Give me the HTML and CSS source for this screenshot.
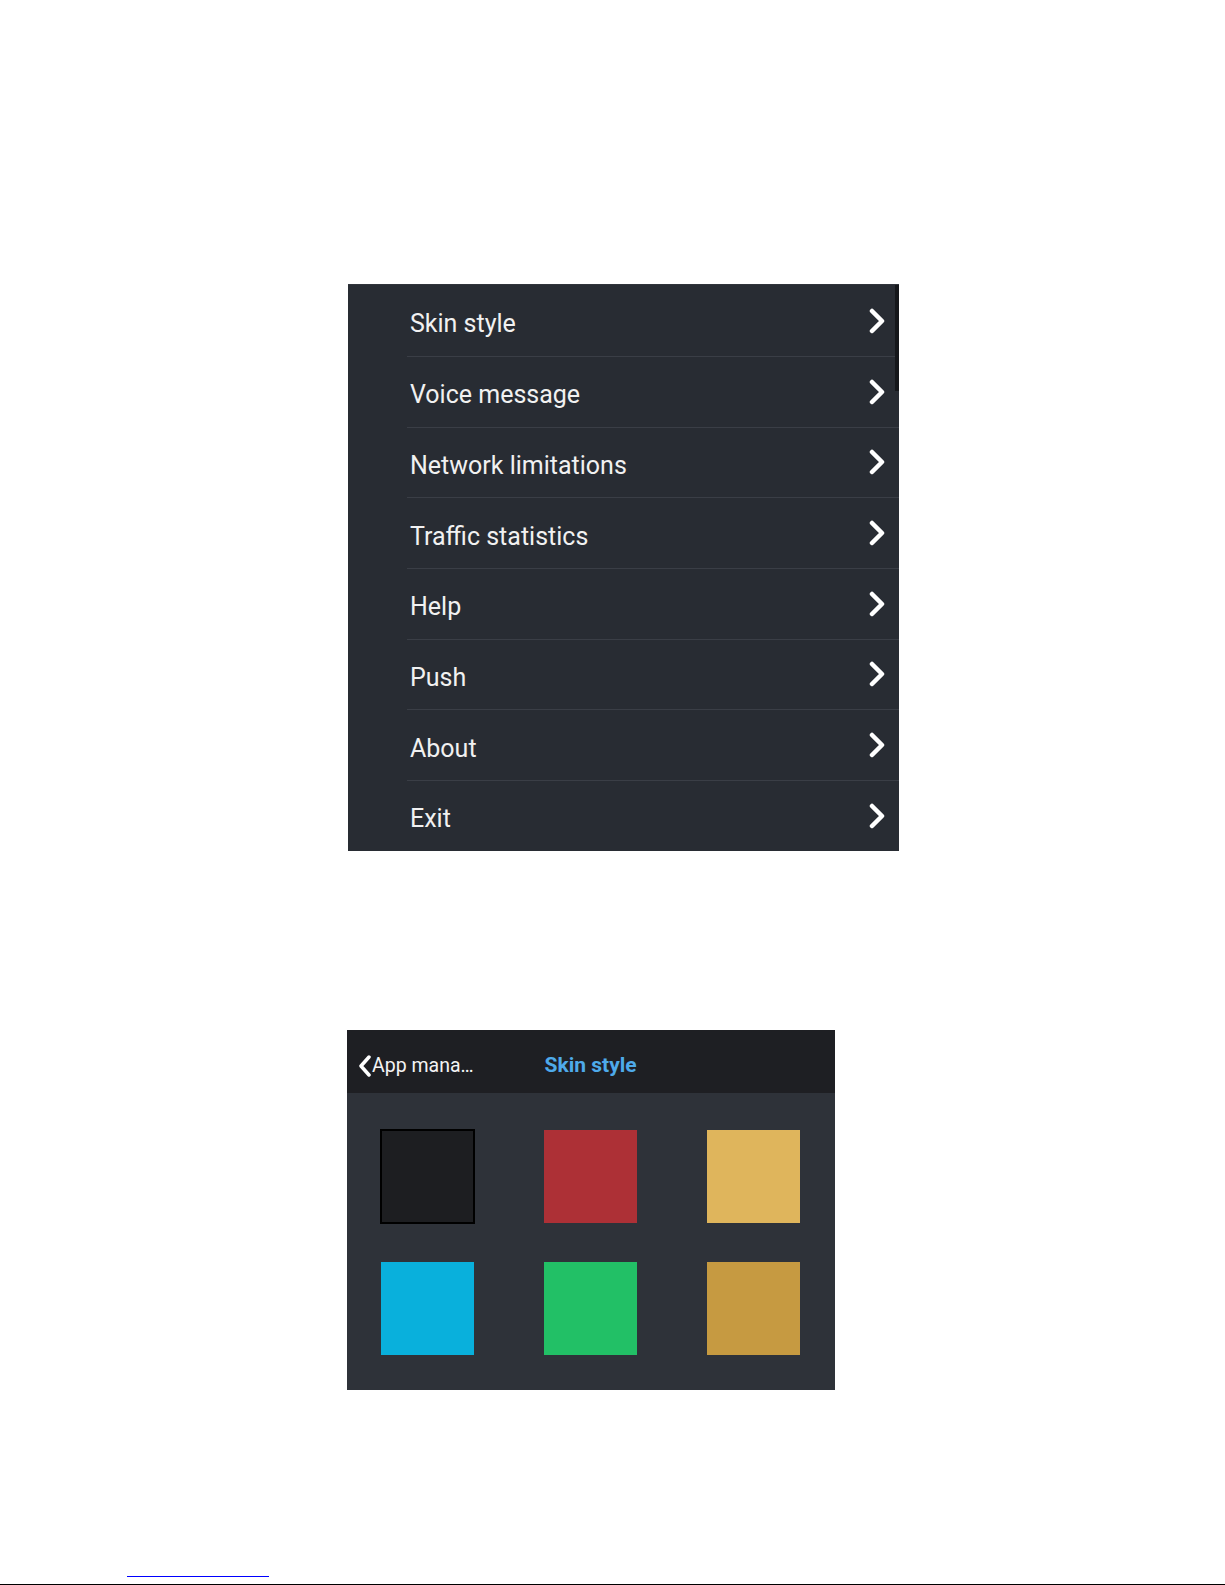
FILE: index.html
```html
<!DOCTYPE html>
<html lang="en">
<head>
    <meta charset="UTF-8">
    <meta name="viewport" content="width=device-width, initial-scale=1.0">
    <title>App settings</title>
    <link rel="stylesheet" href="styles.css">
</head>
<body>
    <div class="page">
        <div class="menu">
            <span class="scroll-thumb"></span>
            <div class="menu-item"><span>Skin style</span><svg class="arrow" viewBox="0 0 20 26"><path d="M5 3 L15 13 L5 23"/></svg></div>
            <div class="menu-item"><span>Voice message</span><svg class="arrow" viewBox="0 0 20 26"><path d="M5 3 L15 13 L5 23"/></svg></div>
            <div class="menu-item"><span>Network limitations</span><svg class="arrow" viewBox="0 0 20 26"><path d="M5 3 L15 13 L5 23"/></svg></div>
            <div class="menu-item"><span>Traffic statistics</span><svg class="arrow" viewBox="0 0 20 26"><path d="M5 3 L15 13 L5 23"/></svg></div>
            <div class="menu-item"><span>Help</span><svg class="arrow" viewBox="0 0 20 26"><path d="M5 3 L15 13 L5 23"/></svg></div>
            <div class="menu-item"><span>Push</span><svg class="arrow" viewBox="0 0 20 26"><path d="M5 3 L15 13 L5 23"/></svg></div>
            <div class="menu-item"><span>About</span><svg class="arrow" viewBox="0 0 20 26"><path d="M5 3 L15 13 L5 23"/></svg></div>
            <div class="menu-item"><span>Exit</span><svg class="arrow" viewBox="0 0 20 26"><path d="M5 3 L15 13 L5 23"/></svg></div>
        </div>

        <div class="skin-panel">
            <div class="skin-header">
                <div class="back">
                    <svg class="back-arrow" viewBox="0 0 14 22"><path d="M11 2 L3 11 L11 20"/></svg>
                    <span>App mana…</span>
                </div>
                <div class="skin-title">Skin style</div>
            </div>
            <div class="swatches">
                <div class="swatch black"></div>
                <div class="swatch red"></div>
                <div class="swatch yellow"></div>
                <div class="swatch blue"></div>
                <div class="swatch green"></div>
                <div class="swatch gold"></div>
            </div>
        </div>
    </div>

    <div class="footnote">
        <span class="note-link"></span>
    </div>
    <div class="page-rule"></div>
</body>
</html>
```

FILE: styles.css
```css
body {
    margin: 0;
    background: #fff;
    font-family: Roboto, "Noto Sans", sans-serif;
}

.page {
    padding: 284px 0 0 347px;
}

.menu {
    position: relative;
    width: 551px;
    margin-left: 1px;
    background: #282c33;
    border-top: 1px solid #31353c;
}

.scroll-thumb {
    position: absolute;
    top: 0;
    right: 0;
    width: 4px;
    height: 106px;
    background: #15171b;
}

.menu-item {
    display: flex;
    align-items: center;
    justify-content: space-between;
    height: 69.67px;
    margin-left: 59px;
    padding: 0 12px 0 3px;
    border-top: 1px solid #3a3e46;
    color: #f1f1f1;
    font-size: 25px;
}

.menu-item span {
    margin-top: 6px;
}

.menu-item:first-of-type {
    border-top: none;
    height: 71px;
}

.arrow {
    width: 20px;
    height: 26px;
}

.arrow path {
    fill: none;
    stroke: #fff;
    stroke-width: 4.5;
    stroke-linecap: round;
    stroke-linejoin: round;
}

.skin-panel {
    width: 488px;
    margin-top: 179px;
}

.skin-header {
    display: flex;
    align-items: center;
    height: 55px;
    padding: 8px 0 0 11px;
    background: #1e1f23;
}

.back {
    display: flex;
    align-items: center;
    color: #f4f4f4;
    font-size: 19.5px;
}

.back-arrow {
    width: 14px;
    height: 22px;
    margin-top: 2px;
}

.back-arrow path {
    fill: none;
    stroke: #fff;
    stroke-width: 3.5;
    stroke-linecap: round;
    stroke-linejoin: round;
}

.skin-title {
    margin-left: 71px;
    color: #4eaaea;
    font-size: 21px;
    font-weight: bold;
}

.swatches {
    display: grid;
    grid-template-columns: repeat(3, 93px);
    column-gap: 70px;
    row-gap: 38px;
    padding: 37px 34px 35px;
    background: #2e3239;
}

.swatch {
    height: 93px;
    box-sizing: border-box;
}

.swatch.black {
    background: #1d1e21;
    border: 2px solid #000;
    margin: -1px 0 0 -1px;
    width: 95px;
    height: 95px;
}

.swatch.red { background: #ad3036; }
.swatch.yellow { background: #dfb55c; }
.swatch.blue { background: #09b0dc; }
.swatch.green { background: #22c066; }
.swatch.gold { background: #c69a41; }

.footnote {
    height: 187px;
    position: relative;
}

.note-link {
    position: absolute;
    left: 127px;
    bottom: 0;
    width: 142px;
    height: 1px;
    background: #0000ff;
}

.page-rule {
    margin-top: 7px;
    height: 2px;
    background: #000;
}
```
